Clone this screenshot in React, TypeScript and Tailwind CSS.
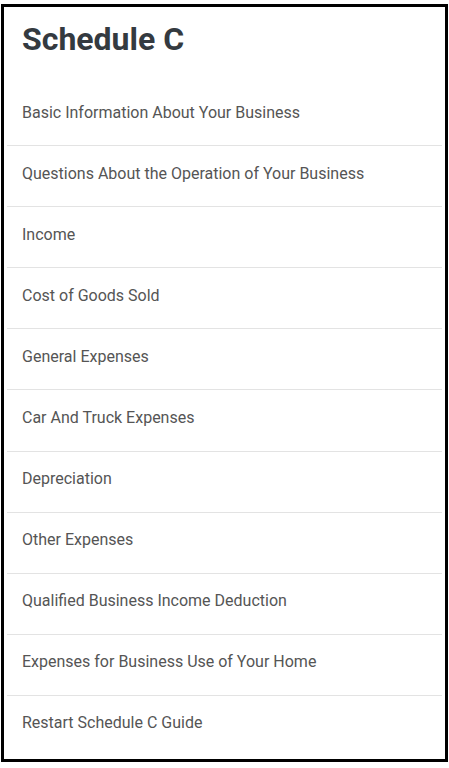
import React from 'react';

const sections = [
    'Basic Information About Your Business',
    'Questions About the Operation of Your Business',
    'Income',
    'Cost of Goods Sold',
    'General Expenses',
    'Car And Truck Expenses',
    'Depreciation',
    'Other Expenses',
    'Qualified Business Income Deduction',
    'Expenses for Business Use of Your Home',
    'Restart Schedule C Guide',
];

export default function App() {
    return (
        <div className="pt-[4px] pl-[1px] bg-white" style={{ fontFamily: 'Roboto, "Noto Sans", sans-serif' }}>
            <div className="w-[447px] h-[758px] border-[3px] border-black bg-white overflow-hidden">
                <div className="mx-[3px]">
                    <h1 className="pt-[13px] px-[15px] text-[32px] leading-[38px] font-bold text-[#343a40]">Schedule C</h1>
                    <ul className="mt-[27px]">
                        {sections.map((name, i) => (
                            <li
                                key={name}
                                className={`px-[15px] pt-[15.5px] pb-[20.6px] text-[16px] leading-[24px] text-[#555] ${i < sections.length - 1 ? 'border-b border-[#e3e3e3]' : ''}`}
                            >
                                {name}
                            </li>
                        ))}
                    </ul>
                </div>
            </div>
        </div>
    );
}
